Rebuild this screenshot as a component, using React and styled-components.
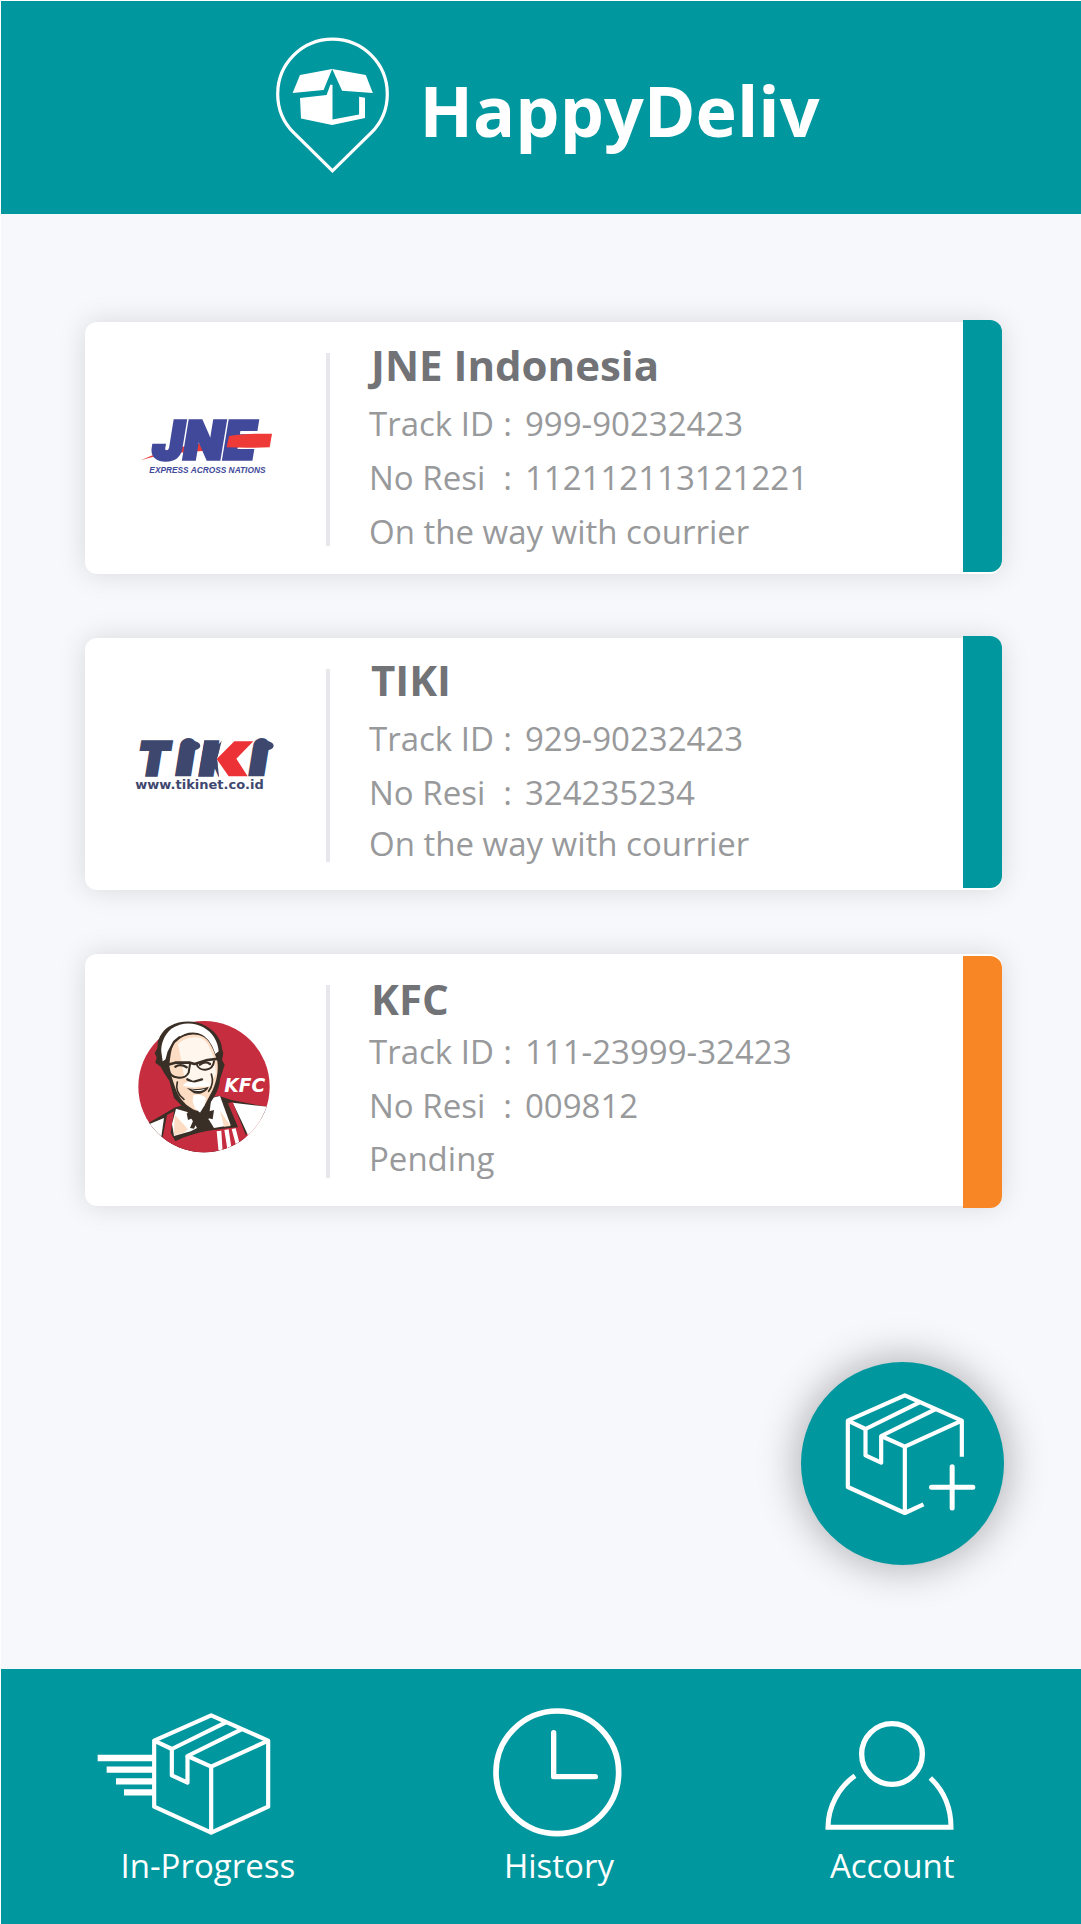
import React from "react";
import styled, { createGlobalStyle } from "styled-components";

const color = {
  teal: "#00979e",
  orange: "#f98625",
  page: "#f7f8fc",
  card: "#ffffff",
  divider: "#e7e8ec",
  title: "#727377",
  text: "#98999b",
};

const GlobalStyle = createGlobalStyle`
  *, *::before, *::after { box-sizing: border-box; }
  body {
    margin: 0;
    background: ${color.page};
    font-family: "Open Sans", "Noto Sans", sans-serif;
  }
`;

const Screen = styled.div`
  display: flex;
  flex-direction: column;
  min-height: 100vh;
  border: solid #fff;
  border-width: 1px 0 0 1px;
`;

const Header = styled.header`
  display: flex;
  justify-content: center;
  padding: 35px 0 30px 12px;
  background: ${color.teal};
`;

const Brand = styled.h1`
  display: flex;
  align-items: center;
  gap: 30px;
  height: 148px;
  margin: 0;
  color: #fff;
  font-size: 70px;
  font-weight: 700;
  line-height: 96px;
`;

const Main = styled.main`
  display: flex;
  flex: 1;
  flex-direction: column;
  justify-content: space-between;
  padding: 108px 77px 104px 84px;
`;

const CardList = styled.ul`
  display: flex;
  flex-direction: column;
  gap: 64px;
  margin: 0 2px 64px 0;
  padding: 0;
  list-style: none;
`;

const Card = styled.li`
  display: flex;
  min-height: 252px;
  border-radius: 12px;
  background: ${color.card};
  box-shadow: 0 0 28px rgba(0, 0, 0, 0.13);
`;

const LogoCell = styled.div`
  display: flex;
  flex: 0 0 241px;
  align-items: center;
  justify-content: center;
`;

const Divider = styled.div`
  flex: 0 0 4px;
  margin: 31px 0 28px;
  background: ${color.divider};
`;

const Details = styled.div`
  flex: 1;
  padding: ${(p) => p.$top}px 16px 12px 39px;
  color: ${color.text};
  font-size: 33px;
  line-height: 54px;
`;

const Title = styled.h2`
  margin: 0 0 ${(p) => p.$gap}px;
  padding-left: 2px;
  color: ${color.title};
  font-size: 42px;
  font-weight: 700;
  line-height: 52px;
`;

const Facts = styled.dl`
  display: grid;
  grid-template-columns: 143px 1fr;
  column-gap: 13px;
  margin: 0;
`;

const Term = styled.dt`
  display: flex;
  justify-content: space-between;
`;

const Value = styled.dd`
  margin: 0;
`;

const Status = styled.p`
  margin: 0;
  line-height: ${(p) => p.$line}px;
`;

const Accent = styled.div`
  flex: 0 0 39px;
  margin: ${(p) => (p.$pending ? "2px 0 -2px" : "-2px 0 2px")};
  border-radius: 0 12px 12px 0;
  background: ${(p) => (p.$pending ? color.orange : color.teal)};
`;

const AddButton = styled.button`
  align-self: flex-end;
  width: 203px;
  height: 203px;
  padding: 0;
  border: 0;
  border-radius: 50%;
  background: ${color.teal};
  box-shadow: 0 0 40px 3px rgba(0, 0, 0, 0.3);
  cursor: pointer;
`;

const Nav = styled.nav`
  display: grid;
  grid-template-columns: 414fr 289fr 378fr;
  padding: 39px 0 28px;
  background: ${color.teal};
`;

const NavItem = styled.a`
  display: flex;
  flex-direction: column;
  align-items: center;
  color: #fff;
  font-size: 33px;
  line-height: 60px;
  text-decoration: none;
`;

const Icon = styled.svg`
  display: block;
  flex: none;
  overflow: visible;
  fill: none;
  stroke: #fff;
`;

const Logo = styled.svg`
  display: block;
  overflow: visible;
`;

const PinMark = () => (
  <Icon width="115" height="148" viewBox="0 -1 115 148" aria-hidden="true">
    <path
      strokeWidth="3.2"
      d="M57.5 133.8 18.7 95.7A54.8 54.8 0 1 1 96.3 95.7Z"
    />
    <g fill="#fff" stroke="none">
      <path d="M57.2 32 25 38 17.6 56 48.6 53Z" />
      <path d="M57.2 32 90.8 38 97.8 56 67.1 53.8Z" />
      <path d="M57.5 47.8H55.3L51.6 58 25 61 26 81.4 57.1 88 90 81V60.8L84.1 59.8V77.4L57.5 82.4Z" />
    </g>
  </Icon>
);

const Parcel = ({ open }) => (
  <g strokeWidth="12.5" strokeLinejoin="round">
    <path
      d={
        open
          ? "M577 380V272L406 196 235 272V471L406 549 462 523"
          : "M577 272 406 196 235 272V470L406 548 577 470Z"
      }
    />
    <path d="M235 272 288 297 450 217M497 238 335 318 406 350 577 272M406 350V549" />
    <path d="M288 297V376L335 398V318" />
  </g>
);

const AddParcelIcon = () => (
  <Icon width="203" height="203" viewBox="94.5 96 609 609" aria-hidden="true">
    <Parcel open />
    <path strokeWidth="15" strokeLinecap="round" d="M548 410V534M486 472H610" />
  </Icon>
);

const ProgressIcon = () => (
  <Icon width="222" height="128" viewBox="51 54 666 384" aria-hidden="true">
    <g transform="translate(-12.5 -120)">
      <Parcel />
    </g>
    <path strokeWidth="19" d="M53 204H220M80 239H220M108 274H220M132 307H220" />
  </Icon>
);

const ClockIcon = () => (
  <Icon width="128" height="128" viewBox="108 54 384 384" aria-hidden="true">
    <circle cx="295" cy="247" r="184" strokeWidth="17" />
    <path
      strokeWidth="16"
      strokeLinecap="round"
      strokeLinejoin="round"
      d="M284 128V260H409"
    />
  </Icon>
);

const PersonIcon = () => (
  <Icon width="128" height="128" viewBox="1106 54 384 384" aria-hidden="true">
    <circle cx="1298" cy="192" r="91" strokeWidth="16" />
    <path
      strokeWidth="15"
      d="M1187 257C1139 291 1106 350 1106 412H1475C1475 354 1454 303 1413 264"
    />
  </Icon>
);

const JneLogo = () => (
  <Logo width="170" height="90" viewBox="3 7 510 270" role="img" aria-label="JNE">
    <path fill="#ee3b37" d="M62 179 130 150 240 128 256 150 130 160Z" />
    <text
      x="98"
      y="176"
      fill="#41499a"
      stroke="#41499a"
      strokeWidth="10"
      fontFamily="Inter, sans-serif"
      fontSize="156"
      fontWeight="900"
      fontStyle="italic"
    >
      JNE
    </text>
    <path fill="#ee3b37" d="M327 106C370 99 410 99 456 99L449 140C400 142 360 142 320 140Z" />
    <text
      x="88"
      y="217"
      fill="#41499a"
      fontFamily="'Liberation Sans', sans-serif"
      fontSize="25"
      fontWeight="700"
      fontStyle="italic"
    >
      EXPRESS ACROSS NATIONS
    </text>
  </Logo>
);

const TikiLogo = () => (
  <Logo width="170" height="90" viewBox="2 -5 510 270" role="img" aria-label="TIKI">
    <defs>
      <clipPath id="tiki-stem">
        <path d="M253 50H307L290 114 297 175H230Z" />
      </clipPath>
    </defs>
    <g
      fill="#3e486f"
      stroke="#3e486f"
      fontFamily="Inter, sans-serif"
      fontWeight="900"
      fontStyle="italic"
    >
      <text x="54" y="162" fontSize="134" strokeWidth="11">T</text>
      <text x="178" y="154" fontSize="112" strokeWidth="26">i</text>
      <g clipPath="url(#tiki-stem)">
        <text x="246" y="157" fontSize="118" strokeWidth="22">K</text>
      </g>
      <text x="398" y="154" fontSize="112" strokeWidth="26">i</text>
    </g>
    <ellipse cx="213" cy="75" rx="27" ry="15" fill="#3e486f" />
    <ellipse cx="433" cy="75" rx="27" ry="15" fill="#3e486f" />
    <path fill="#ec3237" d="M342 62H399L348 114 382 167H325L289 115Z" />
    <text
      x="45"
      y="205"
      fill="#3e486f"
      fontFamily="'DejaVu Sans', sans-serif"
      fontSize="39"
      fontWeight="700"
    >
      www.tikinet.co.id
    </text>
  </Logo>
);

const KfcLogo = () => (
  <Logo width="155" height="150" viewBox="8 -17 465 450" role="img" aria-label="KFC">
    <defs>
      <clipPath id="kfc-disc">
        <circle cx="236" cy="228" r="197" />
      </clipPath>
    </defs>
    <circle cx="236" cy="228" r="197" fill="#c62d3f" />
    <g clipPath="url(#kfc-disc)">
      <path
        fill="#3a2f26"
        d="M60 342 112 312 150 290 280 255 318 268 430 290 420 312 362 372 340 440H150L90 390Z"
      />
      <path fill="#fff" d="M60 345 116 322 106 392 60 380Z" />
      <path fill="#fff" d="M322 276 440 290 420 330 368 374 348 330Z" />
      <path fill="#c62d3f" d="M125 313 146 302 136 366 150 392C210 362 270 356 338 350L308 278 322 274 368 390 340 440H150L112 380Z" />
      <path fill="#fff" d="M152 294 186 304 215 352 196 362 146 376 140 340Z" />
      <path fill="#fcdcc2" d="M148 312 188 356 176 366 146 374Z" />
      <path fill="#fff" d="M258 262 284 256 316 344 266 352 250 326Z" />
      <path fill="#fcdcc2" d="M284 300 316 346 296 348Z" />
      <path fill="#fff" d="M274 362 288 360 292 425 280 425ZM297 358 310 356 318 410 306 415ZM319 355 331 353 342 396 332 404Z" />
    </g>
    <path
      fill="#3a2f26"
      d="M98 92C104 72 116 56 134 46C164 29 210 28 240 45C268 60 288 84 290 114L294 128 290 148 298 162 290 188 284 206C282 236 268 258 250 284L232 308C208 312 178 298 160 276L146 262 132 210 116 186 106 168 90 156 94 140 88 128 96 112Z"
    />
    <path
      fill="#fff"
      d="M108 124C106 102 116 72 138 54C168 34 206 34 234 50C262 66 278 92 280 122L270 130C262 104 250 84 230 72C206 60 176 66 158 82C138 92 132 118 124 144L112 152Z"
    />
    <path
      fill="#fcdcc2"
      d="M144 100C158 84 176 74 198 72C228 70 248 84 258 106C266 120 270 134 276 152C280 180 274 212 262 238L240 280 214 300C184 290 160 262 150 232L138 196 132 166C134 138 138 116 144 100Z"
    />
    <path
      fill="#fff6ee"
      d="M158 100C174 84 204 76 228 82C248 94 262 124 266 146L272 188 254 228 196 222 176 196 168 150Z"
    />
    <g fill="none" stroke="#3a2f26" strokeLinecap="round" strokeLinejoin="round">
      <path strokeWidth="7" d="M122 154 130 124 146 94 162 80" />
      <path strokeWidth="8" d="M122 164 150 156 192 156 208 160 246 148 282 144" />
      <path strokeWidth="6" d="M130 178C134 204 178 210 190 186L194 160M214 160C220 184 262 184 266 152" />
      <path strokeWidth="7" d="M150 168C160 162 172 162 184 170M224 162C234 154 246 154 254 160M186 206 202 214 230 206" />
      <path strokeWidth="5" d="M156 214C150 236 160 254 176 266M258 190C264 208 260 228 250 242" />
    </g>
    <path fill="#fff" d="M172 226C182 208 202 212 216 220C230 206 248 212 256 224C242 230 230 228 218 228C204 234 188 226 172 226Z" />
    <path fill="#3a2f26" d="M184 232C204 238 232 234 250 228C244 246 222 252 206 248Z" />
    <path fill="#fff" d="M196 236C210 240 228 238 240 234C232 242 210 244 196 236Z" />
    <path fill="#fff" d="M204 254C216 248 232 252 242 262L238 284 224 306 208 292 202 272Z" />
    <path fill="#3a2f26" d="M184 308 216 304 228 308 266 298 262 326 238 320 248 354 226 356 220 322 206 354 194 352 208 320 188 328Z" />
    <text
      x="297"
      y="243"
      fill="#fff"
      fontFamily="'DejaVu Sans', sans-serif"
      fontSize="56"
      fontWeight="700"
      fontStyle="italic"
    >
      KFC
    </text>
  </Logo>
);

const parcels = [
  {
    name: "JNE Indonesia",
    logo: JneLogo,
    trackId: "999-90232423",
    resi: "112112113121221",
    status: "On the way with courrier",
    top: 17,
    titleGap: 6,
    statusLine: 54,
  },
  {
    name: "TIKI",
    logo: TikiLogo,
    trackId: "929-90232423",
    resi: "324235234",
    status: "On the way with courrier",
    top: 16,
    titleGap: 6,
    statusLine: 48,
  },
  {
    name: "KFC",
    logo: KfcLogo,
    trackId: "111-23999-32423",
    resi: "009812",
    status: "Pending",
    top: 19,
    titleGap: 0,
    statusLine: 52,
    pending: true,
  },
];

const ParcelCard = ({ parcel }) => {
  const CourierLogo = parcel.logo;
  return (
    <Card>
      <LogoCell>
        <CourierLogo />
      </LogoCell>
      <Divider />
      <Details $top={parcel.top}>
        <Title $gap={parcel.titleGap}>{parcel.name}</Title>
        <Facts>
          <Term>
            <span>Track ID</span>
            <span>:</span>
          </Term>
          <Value>{parcel.trackId}</Value>
          <Term>
            <span>No Resi</span>
            <span>:</span>
          </Term>
          <Value>{parcel.resi}</Value>
        </Facts>
        <Status $line={parcel.statusLine}>{parcel.status}</Status>
      </Details>
      <Accent $pending={parcel.pending} />
    </Card>
  );
};

export default function App() {
  return (
    <Screen>
      <GlobalStyle />
      <Header>
        <Brand>
          <PinMark />
          HappyDeliv
        </Brand>
      </Header>
      <Main>
        <CardList>
          {parcels.map((parcel) => (
            <ParcelCard key={parcel.name} parcel={parcel} />
          ))}
        </CardList>
        <AddButton type="button" aria-label="Add parcel">
          <AddParcelIcon />
        </AddButton>
      </Main>
      <Nav>
        <NavItem href="#in-progress">
          <ProgressIcon />
          In-Progress
        </NavItem>
        <NavItem href="#history">
          <ClockIcon />
          History
        </NavItem>
        <NavItem href="#account">
          <PersonIcon />
          Account
        </NavItem>
      </Nav>
    </Screen>
  );
}
